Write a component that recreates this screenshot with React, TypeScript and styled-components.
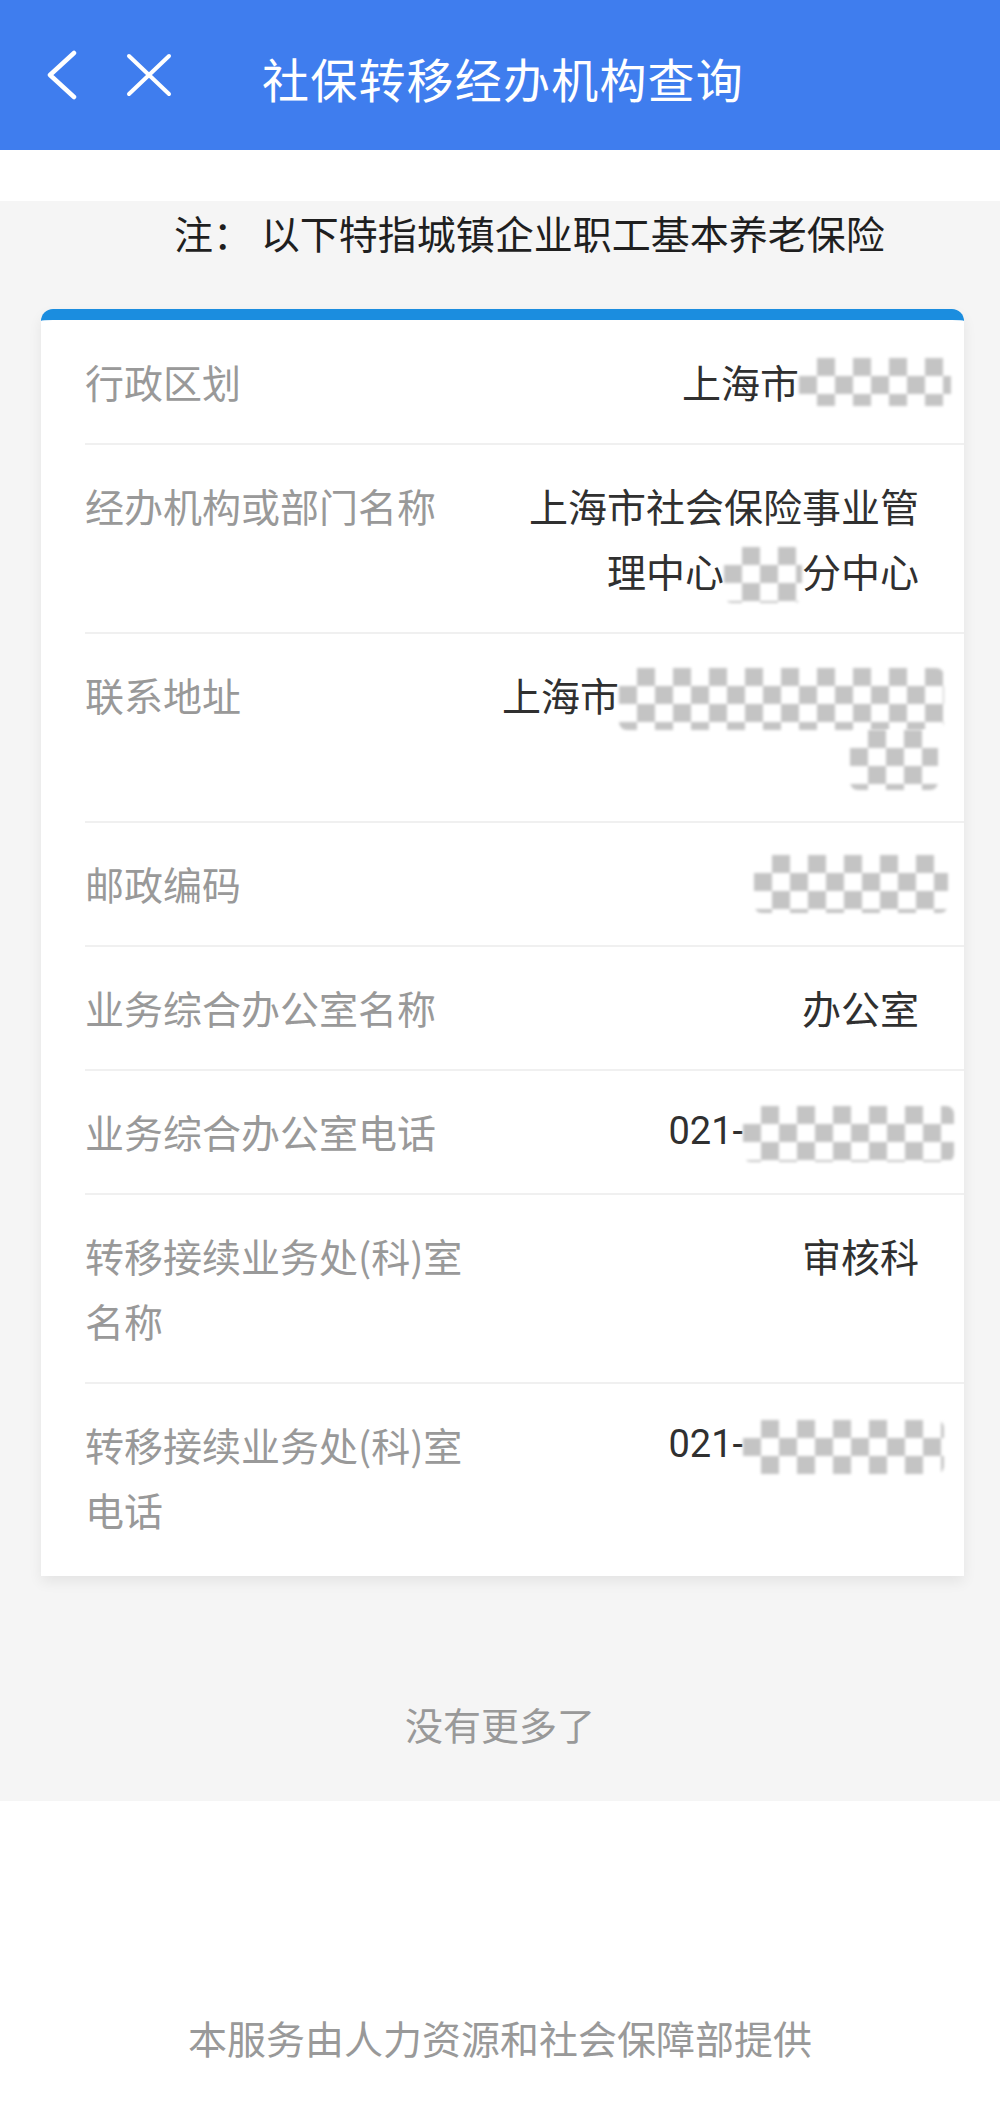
import React from "react";
import styled, { createGlobalStyle } from "styled-components";

const GlobalStyle = createGlobalStyle`
  body {
    margin: 0;
    background: #ffffff;
    font-family: "Noto Sans CJK SC", "Noto Sans", Roboto, sans-serif;
  }
`;

const Page = styled.div`
  width: 1000px;
  min-height: 2105px;
  display: flex;
  flex-direction: column;
  background: #ffffff;
`;

const Header = styled.header`
  height: 150px;
  background: #3f7dee;
  display: flex;
  align-items: center;
  padding-left: 46px;
  box-sizing: border-box;
  color: #ffffff;
`;

const IconButton = styled.span`
  display: flex;
  align-items: center;
  margin-right: ${(p: { gap: number }) => p.gap}px;
`;

const Title = styled.h1`
  margin: 0;
  font-size: 47px;
  font-weight: 400;
  letter-spacing: 1.2px;
  line-height: 1;
  padding-top: 4px;
`;

const Spacer = styled.div`
  height: 51px;
  background: #ffffff;
`;

const Content = styled.main`
  background: #f5f5f5;
  padding-bottom: 47px;
`;

const Note = styled.p`
  margin: 0 0 46px;
  padding-left: 174px;
  font-size: 39px;
  line-height: 62px;
  color: #1f1f1f;
`;

const Card = styled.section`
  margin: 0 36px 0 41px;
  background: #ffffff;
  border-radius: 12px 12px 0 0;
  border-top: 11px solid #1b8ddf;
  box-shadow: 0 6px 14px rgba(0, 0, 0, 0.07);
`;

const Row = styled.div`
  margin-left: 44px;
  padding: 28px 45px 29px 0;
  display: flex;
  justify-content: space-between;
  border-bottom: 2px solid #f0f0f0;
  font-size: 39px;
  line-height: 65px;

  &:first-child {
    padding-top: 29px;
  }

  &:last-child {
    padding-bottom: 34px;
    border-bottom: none;
  }
`;

const Label = styled.div`
  flex: 0 0 400px;
  color: #999999;
`;

const Value = styled.div`
  flex: 1;
  display: flex;
  flex-direction: column;
  align-items: flex-end;
  color: #303030;
  white-space: nowrap;
`;

const Line = styled.div`
  display: flex;
  align-items: center;
  height: 65px;
`;

const Digits = styled.span`
  font-family: Roboto, "Noto Sans", sans-serif;
  font-size: 38px;
`;

type MosaicProps = { w: number; h: number; pull?: number; shift?: number };

const Mosaic = styled.span<MosaicProps>`
  display: inline-block;
  width: ${(p) => p.w}px;
  height: ${(p) => p.h}px;
  margin-right: ${(p) => -(p.pull ?? 0)}px;
  transform: translateY(${(p) => p.shift ?? 0}px);
  background: repeating-conic-gradient(#c4c4c4 0 25%, #ffffff 0 50%) 0 0 / 36px 36px;
  filter: blur(1.5px);
  border-radius: 8px;
`;

const EndText = styled.p`
  margin: 118px 0 0;
  text-align: center;
  font-size: 38px;
  line-height: 60px;
  color: #999999;
`;

const Footer = styled.footer`
  flex: 1;
  display: flex;
  align-items: flex-end;
  justify-content: center;
  padding-bottom: 38px;
  font-size: 39px;
  line-height: 60px;
  color: #999999;
`;

const BackIcon = () => (
  <svg width="32" height="50" viewBox="0 0 32 50" fill="none">
    <polyline points="28,3 4,25 28,47" stroke="#ffffff" strokeWidth="4.5" strokeLinecap="round" strokeLinejoin="round" />
  </svg>
);

const CloseIcon = () => (
  <svg width="46" height="44" viewBox="0 0 46 44" fill="none">
    <line x1="3" y1="3" x2="43" y2="41" stroke="#ffffff" strokeWidth="4" strokeLinecap="round" />
    <line x1="43" y1="3" x2="3" y2="41" stroke="#ffffff" strokeWidth="4" strokeLinecap="round" />
  </svg>
);

type Item = { label: string; lines: React.ReactNode[] };

const items: Item[] = [
  { label: "行政区划", lines: [<>上海市<Mosaic w={152} h={48} pull={32} /></>] },
  {
    label: "经办机构或部门名称",
    lines: ["上海市社会保险事业管", <>理中心<Mosaic w={78} h={56} shift={4} />分中心</>],
  },
  {
    label: "联系地址",
    lines: [<>上海市<Mosaic w={325} h={62} pull={25} shift={4} /></>, <Mosaic w={88} h={60} pull={19} />],
  },
  { label: "邮政编码", lines: [<Mosaic w={194} h={58} pull={29} />] },
  { label: "业务综合办公室名称", lines: ["办公室"] },
  { label: "业务综合办公室电话", lines: [<><Digits>021-</Digits><Mosaic w={211} h={56} pull={35} shift={2} /></>] },
  { label: "转移接续业务处(科)室名称", lines: ["审核科"] },
  { label: "转移接续业务处(科)室电话", lines: [<><Digits>021-</Digits><Mosaic w={201} h={54} pull={25} shift={2} /></>] },
];

const App = () => {
  return (
    <Page>
      <GlobalStyle />
      <Header>
        <IconButton gap={48}>
          <BackIcon />
        </IconButton>
        <IconButton gap={90}>
          <CloseIcon />
        </IconButton>
        <Title>社保转移经办机构查询</Title>
      </Header>
      <Spacer />
      <Content>
        <Note>注： 以下特指城镇企业职工基本养老保险</Note>
        <Card>
          {items.map((item) => (
            <Row key={item.label}>
              <Label>{item.label}</Label>
              <Value>
                {item.lines.map((line, i) => (
                  <Line key={i}>{line}</Line>
                ))}
              </Value>
            </Row>
          ))}
        </Card>
        <EndText>没有更多了</EndText>
      </Content>
      <Footer>本服务由人力资源和社会保障部提供</Footer>
    </Page>
  );
};

export default App;
